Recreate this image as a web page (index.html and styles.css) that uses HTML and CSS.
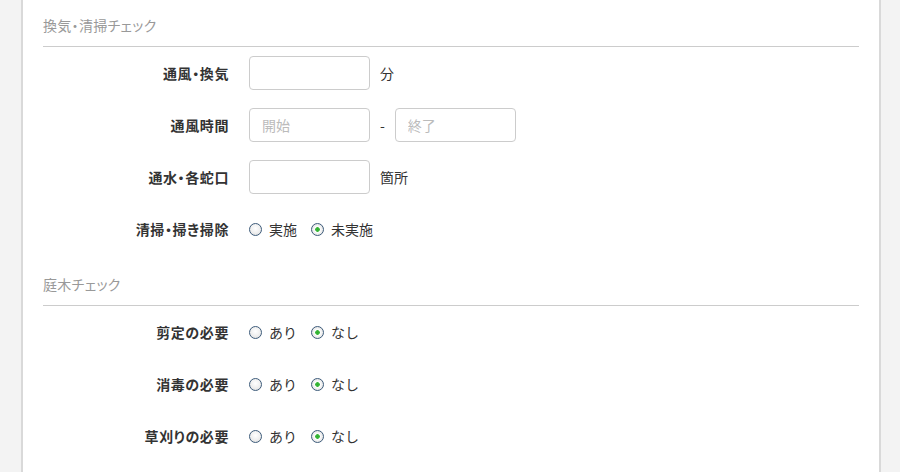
FILE: index.html
```html
<!DOCTYPE html>
<html lang="ja">
<head>
<meta charset="utf-8">
<link rel="stylesheet" href="styles.css">
</head>
<body>
<div class="card">
  <section class="section">
    <h3 class="section-title">換気・清掃チェック</h3>
    <div class="row">
      <label class="label">通風・換気</label>
      <div class="field"><input class="text" type="text"><span class="unit">分</span></div>
    </div>
    <div class="row">
      <label class="label">通風時間</label>
      <div class="field"><input class="text" type="text" placeholder="開始"><span class="dash">-</span><input class="text" type="text" placeholder="終了"></div>
    </div>
    <div class="row">
      <label class="label">通水・各蛇口</label>
      <div class="field"><input class="text" type="text"><span class="unit">箇所</span></div>
    </div>
    <div class="row">
      <label class="label">清掃・掃き掃除</label>
      <div class="field">
        <label class="opt"><input class="radio" type="radio" name="r1">実施</label>
        <label class="opt"><input class="radio" type="radio" name="r1" checked>未実施</label>
      </div>
    </div>
  </section>
  <section class="section">
    <h3 class="section-title">庭木チェック</h3>
    <div class="row">
      <label class="label">剪定の必要</label>
      <div class="field">
        <label class="opt"><input class="radio" type="radio" name="r2">あり</label>
        <label class="opt"><input class="radio" type="radio" name="r2" checked>なし</label>
      </div>
    </div>
    <div class="row">
      <label class="label">消毒の必要</label>
      <div class="field">
        <label class="opt"><input class="radio" type="radio" name="r3">あり</label>
        <label class="opt"><input class="radio" type="radio" name="r3" checked>なし</label>
      </div>
    </div>
    <div class="row">
      <label class="label">草刈りの必要</label>
      <div class="field">
        <label class="opt"><input class="radio" type="radio" name="r4">あり</label>
        <label class="opt"><input class="radio" type="radio" name="r4" checked>なし</label>
      </div>
    </div>
  </section>
</div>
</body>
</html>
```

FILE: styles.css
```css
html, body {
  margin: 0;
  padding: 0;
  background: #f3f3f3;
  height: 472px;
  overflow: hidden;
  font-family: "Noto Sans CJK JP", "Noto Sans", sans-serif;
  color: #333;
  font-size: 14px;
}
.card {
  margin-left: 21px;
  width: 816px;
  min-height: 472px;
  background: #fff;
  border-left: 2px solid #d9d9d9;
  border-right: 2px solid #d9d9d9;
  padding: 15px 20px 0 20px;
  box-sizing: content-box;
}
.section {
  margin-bottom: 28px;
}
.section-title {
  margin: 0;
  font-size: 14px;
  font-weight: normal;
  color: #999;
  line-height: 20px;
  padding-bottom: 11px;
  border-bottom: 1px solid #ccc;
  margin-bottom: 9px;
  font-feature-settings: "palt";
  letter-spacing: 0.3px;
}
.row {
  display: flex;
  align-items: center;
  height: 34px;
  margin-bottom: 18px;
}
.row:last-child { margin-bottom: 0; }
.label {
  width: 186px;
  text-align: right;
  font-weight: bold;
  margin-right: 20px;
  flex-shrink: 0;
  font-feature-settings: "palt";
  letter-spacing: 0.6px;
}
.field {
  display: flex;
  align-items: center;
}
.text {
  width: 121px;
  height: 34px;
  box-sizing: border-box;
  border: 1px solid #ccc;
  border-radius: 4px;
  padding: 0 12px;
  font-family: inherit;
  font-size: 14px;
  color: #333;
  margin: 0;
  outline: none;
}
.text::placeholder { color: #bbb; }
.unit { margin-left: 10px; }
.dash { margin: 0 10px 0 10px; }
.opt {
  display: flex;
  align-items: center;
  margin-right: 14px;
}
.radio {
  appearance: none;
  -webkit-appearance: none;
  width: 13px;
  height: 13px;
  margin: 0 7px 0 0;
  border: 1px solid #3d5b7a;
  border-radius: 50%;
  box-sizing: border-box;
  background: radial-gradient(circle at 50% 40%, #fff 0%, #f0f0f0 50%, #d8d8d8 100%);
  position: relative;
}
.radio:checked {
  background: radial-gradient(circle, #2fae2f 0, #3cb83c 2px, #fff 2.6px, #f2f2f2 4px, #d6d6d6 100%);
}
```
